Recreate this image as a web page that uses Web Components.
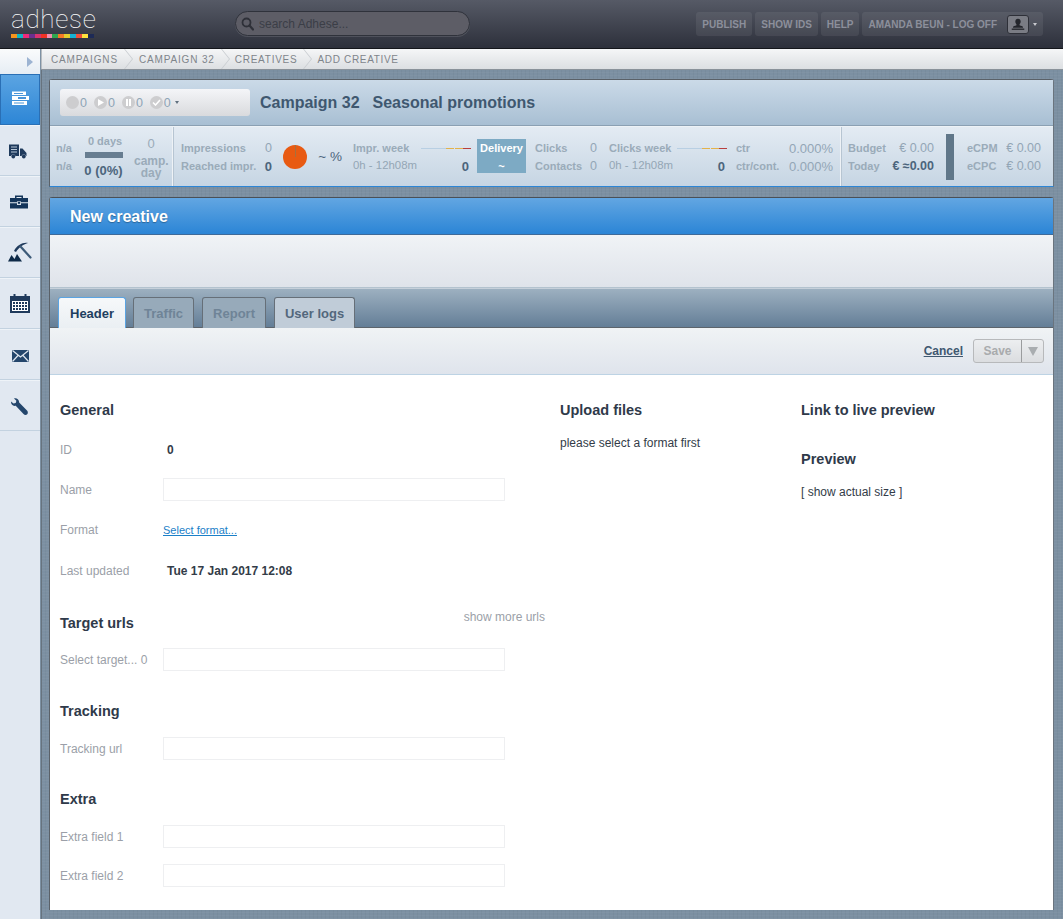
<!DOCTYPE html>
<html lang="en"><head><meta charset="utf-8"><title>Adhese</title>
<style>
html,body{margin:0;padding:0;height:100%}
body{font-family:"Liberation Sans",Arial,sans-serif;background:#7d91a3;overflow:hidden}
</style></head><body>
<ad-app>
  <ad-topbar slot="top"></ad-topbar>
  <ad-sidebar slot="side"></ad-sidebar>
  <ad-crumbs slot="crumbs"></ad-crumbs>
  <ad-campaign></ad-campaign>
  <ad-creative></ad-creative>
</ad-app>
<script>
const def=(name,html,setup)=>customElements.define(name,class extends HTMLElement{
  connectedCallback(){ if(this.shadowRoot)return; const r=this.attachShadow({mode:'open'}); r.innerHTML=typeof html==='function'?html(this):html; if(setup)setup(this,r);} });

def('ad-app',`<style>
:host{display:grid;grid-template-columns:41px 1fr;grid-template-rows:49px 21px 1fr;height:919px;width:1063px;overflow:hidden}
.top{grid-column:1/3}
.side{grid-row:2/4}
main{padding:9px 9px 9px 8px;display:flex;flex-direction:column;gap:10px;min-height:0;
 background-color:#7c90a2;
 background-image:repeating-linear-gradient(0deg,rgba(255,255,255,.03) 0 1px,transparent 1px 3px),repeating-linear-gradient(90deg,rgba(0,0,0,.03) 0 1px,transparent 1px 4px);
 box-shadow:inset 1px 0 0 #67737e}
</style><div class="top"><slot name="top"></slot></div><div class="side"><slot name="side"></slot></div><slot name="crumbs"></slot><main><slot></slot></main>`);

const colors=['#f7941d','#10b5c4','#ec2a7a','#6b2f8e','#d8336f','#ef3224','#f28db0','#2fa84f','#f57a26','#e2cf2e','#17b2d3','#f0503a','#fde23d','#1d2a56'];
def('ad-logo',`<style>
:host{display:block;width:83px;margin:5px 0 0 11px}
.t{font:100 26px/28px Roboto,Lato,sans-serif;color:#fff;letter-spacing:.7px;height:29px;white-space:nowrap}
.b{display:flex;height:4px}.b i{flex:1}
</style><div class="t">adhese</div><div class="b">${colors.map(c=>`<i style="background:${c}"></i>`).join('')}</div>`);

def('ad-search',`<style>
:host{display:flex;align-items:center;gap:5px;width:233px;height:23px;margin:11px 0 0 141px;background:#5d5d66;border:1px solid #2f323b;border-radius:13px;box-shadow:0 1px 0 rgba(255,255,255,.12)}
svg{margin-left:5px;flex:none}
span{font:12px "Liberation Sans",sans-serif;color:#3b3e47}
</style><svg width="13" height="14" viewBox="0 0 13 14"><circle cx="5.500" cy="5.500" r="4" fill="none" stroke="#2e3038" stroke-width="1.800"/><path d="M8.500 8.500l3.500 4" stroke="#2e3038" stroke-width="2.200" stroke-linecap="round"/></svg><span>search Adhese...</span>`);

def('ad-topbtn',`<style>
:host{display:flex;align-items:center;height:24px;padding:0 6px;background:rgba(255,255,255,.07);border-radius:3px;font:bold 10px "Liberation Sans",sans-serif;color:#8c8f9b;white-space:nowrap}
:host([user]){padding-right:6px}
</style><slot></slot>`);

def('ad-topbar',`<style>
:host{display:flex;height:48px;border-bottom:1px solid #14161b;background:linear-gradient(#565a66,#2d303b)}
.r{display:flex;gap:3px;margin:12px 20px 0 auto;align-self:flex-start}
.av{width:22px;height:19px;border:1px solid #2e3038;box-sizing:border-box;border-radius:3px;background:#7a7c84;display:block;margin:0 4px 0 10px}
.car{width:0;height:0;border:2.500px solid transparent;border-top:3px solid #c8c9cf;border-bottom:0}
</style><ad-logo></ad-logo><ad-search></ad-search>
<div class="r"><ad-topbtn>PUBLISH</ad-topbtn><ad-topbtn>SHOW IDS</ad-topbtn><ad-topbtn>HELP</ad-topbtn>
<ad-topbtn user>AMANDA BEUN - LOG OFF<svg class="av" viewBox="0 0 22 19"><path d="M11 3c2 0 3 1.400 3 3.200 0 1.500-.8 2.500-1.300 3.200v1c1.600.7 4 .8 4 2.600H5.300c0-1.800 2.400-1.900 4-2.600v-1C8.800 8.700 8 7.700 8 6.200 8 4.400 9 3 11 3z" fill="#24262c"/><rect x="4" y="14" width="14" height="1.500" fill="#24262c"/></svg><i class="car"></i></ad-topbtn></div>`);

const ic={
 list:`<g fill="#fff"><rect x="4" y="3.500" width="14" height="3.500"/><rect x="4" y="8" width="17" height="4"/><rect x="4" y="13" width="15" height="4"/></g><g fill="#4a95d8"><rect x="6" y="5" width="9" height="1"/><rect x="10" y="9" width="8" height="2"/><rect x="6" y="14.500" width="10" height="1"/></g>`,
 truck:`<path fill="#1f3a5c" d="M1 6.500h10V18H7.500a2.500 2.500 0 0 0-4.500 0H1zM12 10.500h2.500l4 4.500v3h-.5a2.500 2.500 0 0 0-4.500 0H12z"/><circle cx="5.300" cy="18.500" r="1.900" fill="#1f3a5c"/><circle cx="15.800" cy="18.500" r="1.900" fill="#1f3a5c"/><path stroke="#b9c8d8" d="M3 9h6M3 11.500h6M3 14h6"/>`,
 case:`<path fill="#12345a" fill-rule="evenodd" d="M7 9V6.500h8V9h5v4.300H2V9zM8.500 9h5V8h-5zM2 14.300h7v1.700h4v-1.700h7V19.500H2z"/><rect x="9.700" y="12.500" width="2.600" height="2.600" fill="#12345a" stroke="#e1e8f1" stroke-width=".6"/>`,
 mine:`<path d="M6 11C9 5 15 2 20 3c-4 1-9 4-12 9z" fill="#1f3a5c"/><path d="M12.500 6.500L22.500 17.500" stroke="#3c5a78" stroke-width="2.200" stroke-linecap="round"/><path d="M0 21.500l3.500-6.500 3 4 2.500-5 5 7.500z" fill="#0e2a48"/>`,
 cal:`<path fill="#1f3a5c" d="M2 5h3.500V3h2v2h9V3h2v2H22v17H2z"/><rect x="4" y="10" width="16" height="10" fill="#fff"/><g fill="#1f3a5c">${[0,1,2].map(r=>[0,1,2,3,4].map(c=>`<rect x="${5+c*3}" y="${11+r*3}" width="2" height="2"/>`).join('')).join('')}</g>`,
 mail:`<rect x="4" y="8" width="17" height="12" fill="#24466c"/><path d="M4.500 8.500L12.500 15l8-6.500M4.500 19.500L10 13.500M20.500 19.500L15 13.500" stroke="#e1e8f1" stroke-width="1.200" fill="none"/>`,
 wrench:`<path fill="#24466c" d="M6 5.500c2.500-.8 4.800.8 5 3 0 .6.100 1 .4 1.300l7.600 7.700c1 1 1.200 2.800.2 3.800-1 1-2.700.8-3.700-.3l-7.300-7.800c-.4-.3-.8-.4-1.400-.3-2.400.1-4-1.800-3.800-4.300l2.500 2 2.200-.6.700-2.200z"/>`};
def('ad-navitem',h=>`<style>
:host{display:flex;align-items:center;justify-content:center;height:50px;border-bottom:1px solid #c3d2e0;box-shadow:inset 0 1px 0 #eef3f8}
:host([active]){background:linear-gradient(#5ba4e2,#2d86d6);border:1px solid #2a6fb5;box-sizing:border-box;height:51px;box-shadow:none}
svg{display:block;overflow:visible}
</style><svg width="24" height="24" viewBox="0 0 24 24">${ic[h.getAttribute('icon')]}</svg>`);
def('ad-sidebar',`<style>
:host{display:flex;flex-direction:column;height:100%;background:#e1e8f1;width:40px}
.t{height:25px;display:flex;align-items:center;justify-content:flex-end;padding-right:7px;background:linear-gradient(#fafbfc,#e6edf4);box-sizing:border-box}
.t i{border:5px solid transparent;border-left:6px solid #9db4d2;border-right:0}
</style><div class="t"><i></i></div>
<ad-navitem active icon="list"></ad-navitem><ad-navitem icon="truck"></ad-navitem><ad-navitem icon="case"></ad-navitem><ad-navitem icon="mine"></ad-navitem><ad-navitem icon="cal"></ad-navitem><ad-navitem icon="mail"></ad-navitem><ad-navitem icon="wrench"></ad-navitem>`);

const chev=`<svg width="9" height="20" viewBox="0 0 9 20"><path d="M0 0l8 10-8 10h1l8-10L1 0z" fill="#c9cdd1"/></svg>`;
def('ad-crumbs',`<style>
:host{display:flex;align-items:center;height:20px;border-bottom:1px solid #8a929a;background:linear-gradient(#f5f6f7,#dcdfe2);font:10px "Liberation Sans",sans-serif;letter-spacing:.85px;color:#7f858b;padding-left:10px;box-shadow:inset 1px 0 0 #b8bcc0}
span{white-space:nowrap}
svg{margin:0 6px;flex:none}
</style><span>CAMPAIGNS</span>${chev}<span>CAMPAIGN 32</span>${chev}<span style="margin-left:-1px;letter-spacing:.74px">CREATIVES</span>${chev}<span style="margin-left:-1px;letter-spacing:.68px">ADD CREATIVE</span>`);

def('ad-status',`<style>
:host{display:flex;align-items:center;width:190px;height:27px;box-sizing:border-box;padding-left:6px;background:linear-gradient(#f4f5f8,#d9dadd);border-radius:3px;font:12.500px "Liberation Sans",sans-serif;color:#8ea4b6}
.c{width:13px;height:13px;border-radius:50%;background:#cdcdcf;margin-right:1px;display:flex;align-items:center;justify-content:center}
span{margin-right:7px}
.c svg{display:block}
.car{border:2.500px solid transparent;border-top:3px solid #60707e;border-bottom:0;margin-left:-3px}
</style><i class="c"></i><span>0</span>
<i class="c"><svg width="7" height="7"><path d="M1 0l6 3.500L1 7z" fill="#fff"/></svg></i><span>0</span>
<i class="c"><svg width="7" height="7"><path d="M1 0h2v7H1zM4 0h2v7H4z" fill="#fff"/></svg></i><span>0</span>
<i class="c"><svg width="9" height="7"><path d="M1 3.500l2.500 2.500L8 1" stroke="#fff" stroke-width="1.600" fill="none"/></svg></i><span>0</span><i class="car"></i>`);

const spark=`<svg width="50" height="1" viewBox="0 0 50 1"><rect width="25" height="1" fill="#b8cfe3"/><rect x="25" width="8" height="1" fill="#e3b24a"/><rect x="34" width="8" height="1" fill="#e3b24a"/><rect x="42" width="8" height="1" fill="#b93f3f"/></svg>`;

def('ad-campaign',`<style>
:host{display:block;border:1px solid #5a6168;border-bottom:1px solid #2d86d6;border-radius:3px 3px 0 0;background:#fff;flex:none;border-right-color:#6a747e}
.head{height:45px;display:flex;align-items:center;gap:10px;padding-left:10px;background:linear-gradient(#cbdae8,#a8bfd3);border-bottom:1px solid #8ba0b3}
h1{margin:0;font:bold 16px "Liberation Sans",sans-serif;color:#3f5870;white-space:nowrap}
h1 span{margin-left:8.500px}
.stats{display:flex;height:59px;background:linear-gradient(#e3ebf3,#c6d5e3);color:#9aabb9;font:bold 11px/1 "Liberation Sans",sans-serif;white-space:nowrap;border-top:1px solid #edf2f6}
.sep{width:1px;background:#eef2f6;box-shadow:1px 0 0 #b7c5d2;margin-right:1px;flex:none}
.a{padding:12px 0 0 6px;width:21px;flex:none;display:grid;grid-auto-rows:18px;align-content:start;align-items:center}
.mid{width:39px;margin-left:7px;text-align:center;display:flex;flex-direction:column;align-items:center;padding-top:9px;flex:none}
.mid span{padding-left:3px}
.mid b{color:#4c657c;font-size:13px;margin-top:6px;font-weight:bold;white-space:nowrap}
.bar{width:38px;height:6px;background:#677d90;margin-top:5px}
.d3{width:34px;margin-left:11px;text-align:center;line-height:12px;font-size:12px;padding-top:10px;flex:none}
.d3 .z{font-size:13px;line-height:13px;font-weight:normal;display:block;margin-bottom:5px}
.n{color:#93a6b6;font-size:12.500px;font-weight:normal}
.v{color:#4c657c;font-size:13px;font-weight:bold}
.h{font-weight:normal;font-size:11.400px;color:#94a6b5}
.lv{display:grid;grid-template-columns:auto auto;justify-content:space-between;align-content:start;grid-auto-rows:18px;padding-top:12px;flex:none;align-items:center}
.lv span:nth-child(even){text-align:right}
.pie{width:24px;height:24px;border-radius:50%;background:#e85a12;flex:none;align-self:center;margin:0 0 0 11px;position:relative}
.pie:after{content:"";position:absolute;left:12px;top:0;width:1px;height:12px;background:#a5703f}
.pct{width:26px;margin-left:9px;align-self:center;font-size:13.500px;color:#4c657c;font-weight:normal;flex:none;text-align:right}
.dl{width:49px;height:34px;margin:12px 0 0 8px;background:#7daac4;color:#fff;display:flex;flex-direction:column;align-items:center;justify-content:space-between;padding:4px 0 1px;box-sizing:border-box;flex:none}
.wk{width:116px;display:grid;grid-template-columns:1fr auto;align-content:start;grid-auto-rows:18px;padding-top:12px;margin-left:11px;align-items:center;flex:none}
.wk svg{display:block}
.wk .sp{justify-self:end;margin-right:-2px}
</style>
<div class="head"><ad-status></ad-status><h1>Campaign 32<span> Seasonal promotions</span></h1></div>
<div class="stats">
 <div class="a"><span>n/a</span><span>n/a</span></div>
 <div class="mid"><span>0 days</span><div class="bar"></div><b>0 (0%)</b></div>
 <div class="d3"><span class="z">0</span>camp.<br>day</div>
 <div class="sep" style="margin-left:4px"></div>
 <div class="lv" style="width:91px;margin-left:7px"><span>Impressions</span><span class="n">0</span><span>Reached impr.</span><span class="v">0</span></div>
 <div class="pie"></div><div class="pct">~ %</div>
 <div class="wk"><span>Impr. week</span><span class="sp">${spark}</span><span class="h">0h - 12h08m</span><span class="v" style="text-align:right">0</span></div>
 <div class="dl"><span>Delivery</span><span>~</span></div>
 <div class="lv" style="width:62px;margin-left:9px"><span>Clicks</span><span class="n">0</span><span>Contacts</span><span class="n">0</span></div>
 <div class="wk" style="margin-left:12px"><span>Clicks week</span><span class="sp">${spark}</span><span class="h">0h - 12h08m</span><span class="v" style="text-align:right">0</span></div>
 <div class="lv" style="width:97px;margin-left:11px"><span>ctr</span><span class="n" style="font-size:13px">0.000%</span><span>ctr/cont.</span><span class="n" style="font-size:13px">0.000%</span></div>
 <div class="sep" style="margin-left:7px"></div>
 <div class="lv" style="width:86px;margin-left:6px"><span>Budget</span><span class="n">€ 0.00</span><span>Today</span><span class="v" style="font-size:12.500px">€ ≈0.00</span></div>
 <div style="width:8px;height:46px;background:#607789;margin:7px 0 0 12px;flex:none"></div>
 <div class="lv" style="width:74px;margin-left:13px"><span>eCPM</span><span class="n">€ 0.00</span><span>eCPC</span><span class="n">€ 0.00</span></div>
</div>`);

def('ad-tab',`<style>
:host{display:flex;align-items:center;height:30px;padding:0 10px;background:#c0ccd8;border:1px solid #666f78;border-bottom:0;border-radius:3px 3px 0 0;font:bold 13px "Liberation Sans",sans-serif;color:#53677c;white-space:nowrap;margin-bottom:-1px}
:host([active]){padding:0 11px;background:linear-gradient(#f6f8fa,#eaeff3);color:#1e3f60;border-color:#5ba4e2}
:host([disabled]){background:#97aaba;color:#6f8497}
</style><slot></slot>`);

def('ad-section',`<style>
:host{display:block;font:bold 14.500px/20px "Liberation Sans",sans-serif;color:#2f3a4a}
</style><slot></slot>`);
def('ad-field',h=>`<style>
:host{display:grid;grid-template-columns:103px 342px;height:23px;align-items:center;font:12px "Liberation Sans",sans-serif;color:#9b9fa8}
.i{height:23px;box-sizing:border-box;border:1px solid #eeeff1;background:#fff}
</style><span>${h.getAttribute('label')}</span>${h.hasAttribute('input')?'<div class="i"></div>':'<div><slot></slot></div>'}`);

def('ad-creative',`<style>
:host{display:flex;flex-direction:column;flex:1;min-height:0;background:#fff;border:1px solid #5a6168;border-top-color:#4a5057;border-bottom:0;border-radius:3px 3px 0 0;border-right-color:#6a747e}
.title{height:35px;padding:1px 0 0 20px;flex:none;display:flex;align-items:center;background:linear-gradient(#62a6e2,#2b85d6);color:#fff;font:bold 16px "Liberation Sans",sans-serif;text-shadow:0 1px 1px rgba(0,0,0,.3);border-bottom:1px solid #3e6a99}
.band{height:53px;flex:none;background:linear-gradient(#f0f3f6,#dfe3ea);border-bottom:1px solid #b3c2ce;box-sizing:border-box}
.tabs{height:40px;flex:none;display:flex;align-items:flex-end;gap:7px;padding-left:8px;background:linear-gradient(#9db0c0,#647e97);border-top:1px solid #c6d0da;border-bottom:1px solid #5c646c;box-sizing:border-box}
.tb{height:47px;flex:none;display:flex;align-items:center;justify-content:flex-end;padding-right:9px;background:linear-gradient(#f0f3f5,#dfe4ec);border-bottom:1px solid #bdd3e4;box-sizing:border-box;gap:10px}
a{font:bold 12px "Liberation Sans",sans-serif;color:#3f5870;text-decoration:underline}
.save{display:flex;height:24px;width:71px;box-sizing:border-box;border:1px solid #b7b9bb;border-radius:3px;background:linear-gradient(#eceef0,#dbdde0);font:bold 12px "Liberation Sans",sans-serif;color:#a9abad}
.save span{flex:1;display:flex;align-items:center;justify-content:center}
.save i{width:21px;border-left:1px solid #9a9c9e;display:flex;align-items:center;justify-content:center}
.save i:after{content:"";border:5px solid transparent;border-top:9px solid #a9adb0;border-bottom:0}
.body{flex:1;display:grid;grid-template-columns:500px 241px 1fr;padding:25px 0 0 10px;align-content:start}
.col{display:flex;flex-direction:column}
.t{font:12px/16px "Liberation Sans",sans-serif;color:#333c48}
.strong{font:bold 12px "Liberation Sans",sans-serif;color:#333c48;margin-left:4px}
.link{font:11px "Liberation Sans",sans-serif;color:#1b80c8;text-decoration:underline}
.more{display:flex;justify-content:space-between;height:20px;width:485px}
.more span{font:12px "Liberation Sans",sans-serif;color:#9b9fa8;margin-top:-3px}
</style>
<div class="title">New creative</div><div class="band"></div>
<div class="tabs"><ad-tab active>Header</ad-tab><ad-tab disabled>Traffic</ad-tab><ad-tab disabled style="margin-left:1px">Report</ad-tab><ad-tab style="margin-left:1px">User logs</ad-tab></div>
<div class="tb"><a>Cancel</a><div class="save"><span>Save</span><i></i></div></div>
<div class="body">
 <div class="col">
  <ad-section>General</ad-section>
  <ad-field label="ID" style="margin-top:18px"><span class="strong">0</span></ad-field>
  <ad-field label="Name" input style="margin-top:17px"></ad-field>
  <ad-field label="Format" style="margin-top:17px"><span class="link">Select format...</span></ad-field>
  <ad-field label="Last updated" style="margin-top:18px"><span class="strong">Tue 17 Jan 2017 12:08</span></ad-field>
  <div class="more" style="margin-top:31px"><ad-section>Target urls</ad-section><span>show more urls</span></div>
  <ad-field label="Select target... 0" input style="margin-top:15px"></ad-field>
  <ad-section style="margin-top:30px">Tracking</ad-section>
  <ad-field label="Tracking url" input style="margin-top:16px"></ad-field>
  <ad-section style="margin-top:29px">Extra</ad-section>
  <ad-field label="Extra field 1" input style="margin-top:16px"></ad-field>
  <ad-field label="Extra field 2" input style="margin-top:16px"></ad-field>
 </div>
 <div class="col"><ad-section>Upload files</ad-section><div class="t" style="margin-top:15px">please select a format first</div></div>
 <div class="col"><ad-section>Link to live preview</ad-section><ad-section style="margin-top:29px">Preview</ad-section><div class="t" style="margin-top:15px">[ show actual size ]</div></div>
</div>`);
</script></body></html>
